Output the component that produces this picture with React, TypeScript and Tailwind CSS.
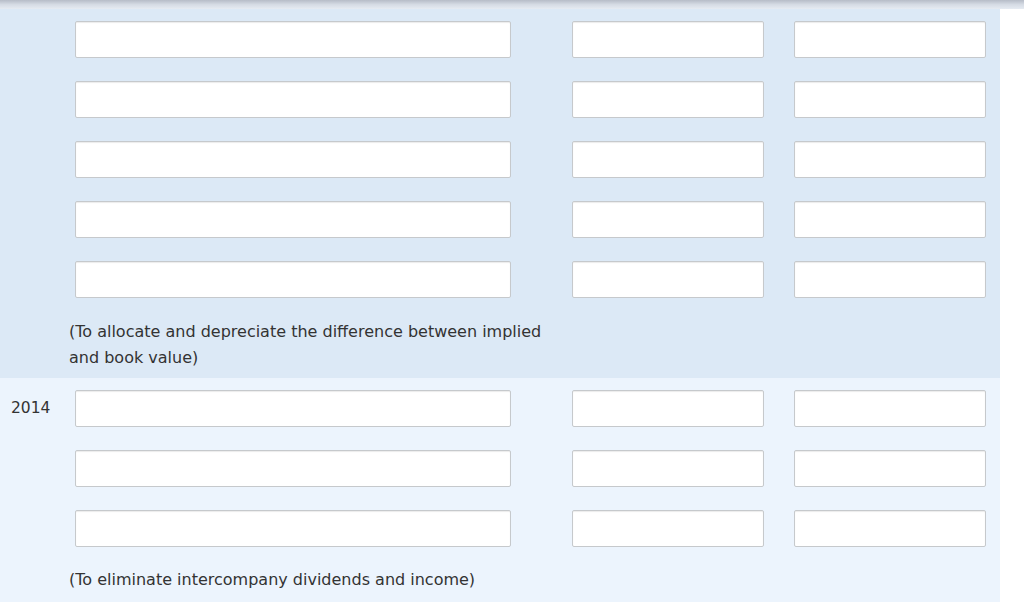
const font = { fontFamily: '"DejaVu Sans", Verdana, sans-serif' }

function Field({ className }: { className: string }) {
  return (
    <input
      type="text"
      className={`h-[37px] rounded-[2px] border border-[#c6c9cc] bg-white shadow-[inset_0_1px_1px_rgba(0,0,0,0.08)] outline-none ${className}`}
    />
  )
}

function EntryRow({ label }: { label?: string }) {
  return (
    <div className="flex items-center">
      <div className="w-[75px] pl-[11px] text-[15.5px] text-[#333]">{label}</div>
      <Field className="w-[436px]" />
      <Field className="ml-[61px] w-[192px]" />
      <Field className="ml-[30px] w-[192px]" />
    </div>
  )
}

export default function App() {
  return (
    <div className="h-[602px] w-[1024px] overflow-hidden bg-white" style={font}>
      <div className="h-[9px] w-full bg-gradient-to-b from-[#b6bcc7] via-[#d5dbe4] to-[#e6ebf2]" />
      <div className="w-[1000px] bg-[#dce9f6] pt-[12px] pb-[7px]">
        <div className="flex flex-col gap-[23px]">
          <EntryRow />
          <EntryRow />
          <EntryRow />
          <EntryRow />
          <EntryRow />
        </div>
        <p className="mt-[21px] ml-[69px] w-[480px] text-[16px] leading-[26px] text-[#333]">
          (To allocate and depreciate the difference between implied and book value)
        </p>
      </div>
      <div className="h-[224px] w-[1000px] bg-[#ecf4fd] pt-[12px]">
        <div className="flex flex-col gap-[23px]">
          <EntryRow label="2014" />
          <EntryRow />
          <EntryRow />
        </div>
        <p className="mt-[20px] ml-[69px] text-[16px] leading-[26px] text-[#333]">
          (To eliminate intercompany dividends and income)
        </p>
      </div>
    </div>
  )
}
